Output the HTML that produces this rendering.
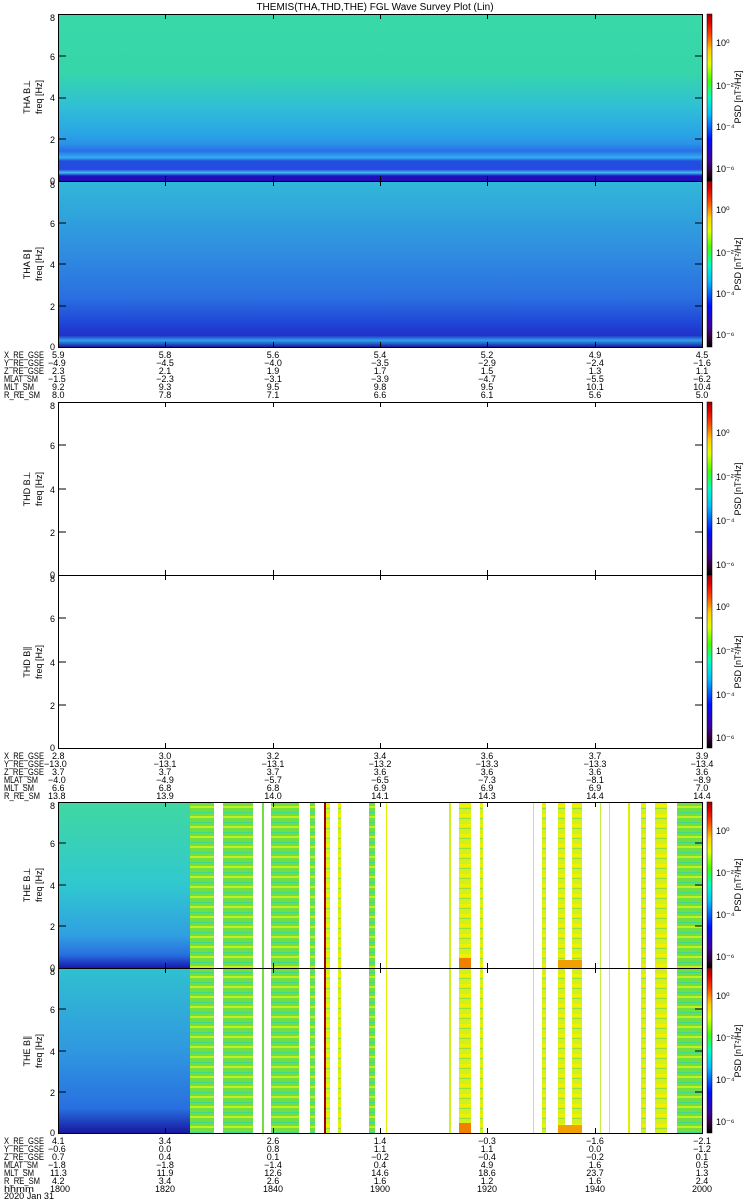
<!DOCTYPE html>
<html><head><meta charset="utf-8"><style>
html,body{margin:0;padding:0;background:#fff;width:750px;height:1200px;overflow:hidden}
svg{display:block}
text{font-family:"Liberation Sans",sans-serif;font-size:9px;fill:#000}
</style></head><body>
<svg width="750" height="1200" viewBox="0 0 750 1200" xmlns="http://www.w3.org/2000/svg">
<defs>
<linearGradient id="jet" x1="0" y1="1" x2="0" y2="0">
<stop offset="0" stop-color="#000"/><stop offset="0.05" stop-color="#300030"/><stop offset="0.12" stop-color="#4000a0"/><stop offset="0.25" stop-color="#0010ff"/><stop offset="0.4" stop-color="#00c0ff"/><stop offset="0.5" stop-color="#00ffc0"/><stop offset="0.6" stop-color="#40ff00"/><stop offset="0.7" stop-color="#e0ff00"/><stop offset="0.78" stop-color="#ffd000"/><stop offset="0.88" stop-color="#ff4000"/><stop offset="0.95" stop-color="#e00000"/><stop offset="1" stop-color="#a00000"/>
</linearGradient>
<linearGradient id="aBL" x1="0" y1="0" x2="0" y2="1">
<stop offset="0" stop-color="#38d8a8"/><stop offset="0.35" stop-color="#36d6aa"/><stop offset="0.55" stop-color="#30c0d4"/><stop offset="0.72" stop-color="#2aa4e6"/><stop offset="0.78" stop-color="#2a90e8"/><stop offset="0.82" stop-color="#2870e8"/><stop offset="0.86" stop-color="#30b0f0"/><stop offset="0.88" stop-color="#2050e0"/><stop offset="0.93" stop-color="#2848e0"/><stop offset="0.95" stop-color="#40c0f0"/><stop offset="0.97" stop-color="#2010c0"/><stop offset="1" stop-color="#2010b0"/>
</linearGradient>
<linearGradient id="aBII" x1="0" y1="0" x2="0" y2="1">
<stop offset="0" stop-color="#30b8d8"/><stop offset="0.4" stop-color="#3090e0"/><stop offset="0.7" stop-color="#2a70e0"/><stop offset="0.85" stop-color="#2048d8"/><stop offset="0.93" stop-color="#2030c8"/><stop offset="0.96" stop-color="#30a0e8"/><stop offset="1" stop-color="#1818a0"/>
</linearGradient>
<linearGradient id="eBL" x1="0" y1="0" x2="0" y2="1">
<stop offset="0" stop-color="#40d8a0"/><stop offset="0.5" stop-color="#30c8d0"/><stop offset="0.8" stop-color="#30a0e0"/><stop offset="0.92" stop-color="#2870e0"/><stop offset="1" stop-color="#1818b0"/>
</linearGradient>
<linearGradient id="eBII" x1="0" y1="0" x2="0" y2="1">
<stop offset="0" stop-color="#30c0d0"/><stop offset="0.5" stop-color="#3098e0"/><stop offset="0.85" stop-color="#2870e0"/><stop offset="1" stop-color="#1818a0"/>
</linearGradient>
<pattern id="strG" width="4" height="10" patternUnits="userSpaceOnUse"><rect width="4" height="10" fill="#70e040"/><rect y="6" width="4" height="2" fill="#c0f020"/><rect y="2" width="4" height="1" fill="#40d890"/></pattern>
<pattern id="strY" width="4" height="10" patternUnits="userSpaceOnUse"><rect width="4" height="10" fill="#d0f020"/><rect y="4" width="4" height="3" fill="#f0f000"/><rect y="8" width="4" height="1" fill="#90e040"/></pattern>
</defs>

<text x="375" y="10" text-anchor="middle" style="font-size:10px">THEMIS(THA,THD,THE) FGL Wave Survey Plot (Lin)</text>

<rect x="58" y="14" width="644" height="167" fill="url(#aBL)"/>
<rect x="58" y="181" width="644" height="166" fill="url(#aBII)"/>
<rect x="58" y="802" width="134" height="166" fill="url(#eBL)"/>
<rect x="58" y="968" width="134" height="165" fill="url(#eBII)"/>
<g>
<rect x="190" y="802" width="24" height="331" fill="url(#strG)"/>
<rect x="223" y="802" width="30" height="331" fill="url(#strG)"/>
<rect x="262" y="802" width="2" height="331" fill="#70e040"/>
<rect x="271" y="802" width="28" height="331" fill="url(#strG)"/>
<rect x="310" y="802" width="5" height="331" fill="url(#strG)"/>
<rect x="324" y="802" width="2" height="331" fill="#a00000"/>
<rect x="326" y="802" width="4" height="331" fill="url(#strY)"/>
<rect x="338" y="802" width="3" height="331" fill="url(#strY)"/>
<rect x="369" y="802" width="6" height="331" fill="url(#strG)"/>
<rect x="386" y="802" width="1" height="331" fill="#e0f000"/>
<rect x="449" y="802" width="2" height="331" fill="#d0f020"/>
<rect x="459" y="802" width="12" height="331" fill="url(#strY)"/>
<rect x="480" y="802" width="3" height="331" fill="url(#strY)"/>
<rect x="533" y="802" width="1" height="331" fill="#e0f000"/>
<rect x="542" y="802" width="4" height="331" fill="url(#strY)"/>
<rect x="558" y="802" width="7" height="331" fill="url(#strY)"/>
<rect x="572" y="802" width="10" height="331" fill="url(#strY)"/>
<rect x="600" y="802" width="1" height="331" fill="#c0f040"/>
<rect x="609" y="802" width="1" height="331" fill="#e0f000"/>
<rect x="628" y="802" width="2" height="331" fill="#e0f000"/>
<rect x="641" y="802" width="5" height="331" fill="url(#strY)"/>
<rect x="655" y="802" width="12" height="331" fill="url(#strY)"/>
<rect x="677" y="802" width="25" height="331" fill="url(#strG)"/>
<rect x="459" y="958" width="12" height="10" fill="#f08000"/>
<rect x="459" y="1123" width="12" height="10" fill="#f08000"/>
<rect x="558" y="960" width="24" height="8" fill="#f0a000"/>
<rect x="558" y="1125" width="24" height="8" fill="#f0a000"/>
</g>

<g fill="none" stroke="#000" stroke-width="1">
<rect x="58.5" y="14.5" width="644" height="333"/>
<line x1="58" y1="181.5" x2="703" y2="181.5"/>
<rect x="58.5" y="402.5" width="644" height="346"/>
<line x1="58" y1="575.5" x2="703" y2="575.5"/>
<rect x="58.5" y="802.5" width="644" height="331"/>
<line x1="58" y1="968.5" x2="703" y2="968.5"/>
</g>
<g stroke="#000" stroke-width="1">
<path d="M165.5 14v5M273.5 14v5M380.5 14v5M487.5 14v5M595.5 14v5 M165.5 347v-5M273.5 347v-5M380.5 347v-5M487.5 347v-5M595.5 347v-5 M165.5 176v10M273.5 176v10M380.5 176v10M487.5 176v10M595.5 176v10"/>
<path d="M165.5 402v5M273.5 402v5M380.5 402v5M487.5 402v5M595.5 402v5 M165.5 748v-5M273.5 748v-5M380.5 748v-5M487.5 748v-5M595.5 748v-5 M165.5 570v10M273.5 570v10M380.5 570v10M487.5 570v10M595.5 570v10"/>
<path d="M165.5 802v5M273.5 802v5M380.5 802v5M487.5 802v5M595.5 802v5 M165.5 1133v-5M273.5 1133v-5M380.5 1133v-5M487.5 1133v-5M595.5 1133v-5 M165.5 963v10M273.5 963v10M380.5 963v10M487.5 963v10M595.5 963v10"/>
<path d="M58 56h8M58 98h8M58 139h8M58 223h8M58 264h8M58 306h8 M58 445h8M58 489h8M58 532h8M58 618h8M58 662h8M58 705h8 M58 843h8M58 885h8M58 926h8M58 1009h8M58 1051h8M58 1092h8"/>
<path d="M695 56h8M695 98h8M695 139h8M695 223h8M695 264h8M695 306h8 M695 445h8M695 489h8M695 532h8M695 618h8M695 662h8M695 705h8 M695 843h8M695 885h8M695 926h8M695 1009h8M695 1051h8M695 1092h8"/>
</g>

<g text-anchor="end">
<text x="55" y="21">8</text><text x="55" y="60">6</text><text x="55" y="101">4</text><text x="55" y="143">2</text><text x="55" y="184">0</text>
<text x="55" y="188">8</text><text x="55" y="227">6</text><text x="55" y="268">4</text><text x="55" y="310">2</text><text x="55" y="350">0</text>
<text x="55" y="409">8</text><text x="55" y="449">6</text><text x="55" y="493">4</text><text x="55" y="536">2</text><text x="55" y="578">0</text>
<text x="55" y="582">8</text><text x="55" y="622">6</text><text x="55" y="666">4</text><text x="55" y="709">2</text><text x="55" y="751">0</text>
<text x="55" y="809">8</text><text x="55" y="847">6</text><text x="55" y="889">4</text><text x="55" y="930">2</text><text x="55" y="971">0</text>
<text x="55" y="975">8</text><text x="55" y="1013">6</text><text x="55" y="1055">4</text><text x="55" y="1096">2</text><text x="55" y="1136">0</text>
</g>
<g text-anchor="middle">
<text transform="translate(30,97) rotate(-90)">THA B⊥</text><text transform="translate(42,97) rotate(-90)">freq [Hz]</text>
<text transform="translate(30,264) rotate(-90)">THA B∥</text><text transform="translate(42,264) rotate(-90)">freq [Hz]</text>
<text transform="translate(30,489) rotate(-90)">THD B⊥</text><text transform="translate(42,489) rotate(-90)">freq [Hz]</text>
<text transform="translate(30,662) rotate(-90)">THD B∥</text><text transform="translate(42,662) rotate(-90)">freq [Hz]</text>
<text transform="translate(30,885) rotate(-90)">THE B⊥</text><text transform="translate(42,885) rotate(-90)">freq [Hz]</text>
<text transform="translate(30,1051) rotate(-90)">THE B∥</text><text transform="translate(42,1051) rotate(-90)">freq [Hz]</text>
</g>

<g stroke="#000" stroke-width="0.5">
<rect x="707" y="14" width="5" height="167" fill="url(#jet)"/>
<rect x="707" y="181" width="5" height="166" fill="url(#jet)"/>
<rect x="707" y="402" width="5" height="173" fill="url(#jet)"/>
<rect x="707" y="575" width="5" height="173" fill="url(#jet)"/>
<rect x="707" y="802" width="5" height="166" fill="url(#jet)"/>
<rect x="707" y="968" width="5" height="165" fill="url(#jet)"/>
</g>
<g style="font-size:8px">
<text x="716" y="46">10⁰</text><text x="716" y="89">10⁻²</text><text x="716" y="130">10⁻⁴</text><text x="716" y="172">10⁻⁶</text>
<text x="716" y="213">10⁰</text><text x="716" y="256">10⁻²</text><text x="716" y="297">10⁻⁴</text><text x="716" y="338">10⁻⁶</text>
<text x="716" y="436">10⁰</text><text x="716" y="480">10⁻²</text><text x="716" y="524">10⁻⁴</text><text x="716" y="568">10⁻⁶</text>
<text x="716" y="610">10⁰</text><text x="716" y="654">10⁻²</text><text x="716" y="698">10⁻⁴</text><text x="716" y="741">10⁻⁶</text>
<text x="716" y="834">10⁰</text><text x="716" y="876">10⁻²</text><text x="716" y="918">10⁻⁴</text><text x="716" y="960">10⁻⁶</text>
<text x="716" y="999">10⁰</text><text x="716" y="1041">10⁻²</text><text x="716" y="1083">10⁻⁴</text><text x="716" y="1125">10⁻⁶</text>
</g>
<g text-anchor="middle">
<text transform="translate(741,97) rotate(-90)">PSD [nT²/Hz]</text>
<text transform="translate(741,264) rotate(-90)">PSD [nT²/Hz]</text>
<text transform="translate(741,489) rotate(-90)">PSD [nT²/Hz]</text>
<text transform="translate(741,662) rotate(-90)">PSD [nT²/Hz]</text>
<text transform="translate(741,885) rotate(-90)">PSD [nT²/Hz]</text>
<text transform="translate(741,1051) rotate(-90)">PSD [nT²/Hz]</text>
</g>

<g style="font-size:8.5px">
<text x="4" y="358" textLength="40" lengthAdjust="spacingAndGlyphs">X_RE_GSE</text><text x="4" y="366" textLength="40" lengthAdjust="spacingAndGlyphs">Y_RE_GSE</text><text x="4" y="374" textLength="40" lengthAdjust="spacingAndGlyphs">Z_RE_GSE</text><text x="4" y="382" textLength="34" lengthAdjust="spacingAndGlyphs">MLAT_SM</text><text x="4" y="390" textLength="30" lengthAdjust="spacingAndGlyphs">MLT_SM</text><text x="4" y="398" textLength="36" lengthAdjust="spacingAndGlyphs">R_RE_SM</text>
<text x="52" y="358">5.9</text><text x="48" y="366">−4.9</text><text x="52" y="374">2.3</text><text x="48" y="382">−1.5</text><text x="52" y="390">9.2</text><text x="52" y="398">8.0</text>
<g text-anchor="middle">
<text x="165" y="358">5.8</text><text x="165" y="366">−4.5</text><text x="165" y="374">2.1</text><text x="165" y="382">−2.3</text><text x="165" y="390">9.3</text><text x="165" y="398">7.8</text>
<text x="273" y="358">5.6</text><text x="273" y="366">−4.0</text><text x="273" y="374">1.9</text><text x="273" y="382">−3.1</text><text x="273" y="390">9.5</text><text x="273" y="398">7.1</text>
<text x="380" y="358">5.4</text><text x="380" y="366">−3.5</text><text x="380" y="374">1.7</text><text x="380" y="382">−3.9</text><text x="380" y="390">9.8</text><text x="380" y="398">6.6</text>
<text x="487" y="358">5.2</text><text x="487" y="366">−2.9</text><text x="487" y="374">1.5</text><text x="487" y="382">−4.7</text><text x="487" y="390">9.5</text><text x="487" y="398">6.1</text>
<text x="595" y="358">4.9</text><text x="595" y="366">−2.4</text><text x="595" y="374">1.3</text><text x="595" y="382">−5.5</text><text x="595" y="390">10.1</text><text x="595" y="398">5.6</text>
<text x="702" y="358">4.5</text><text x="702" y="366">−1.6</text><text x="702" y="374">1.1</text><text x="702" y="382">−6.2</text><text x="702" y="390">10.4</text><text x="702" y="398">5.0</text>
</g>
<text x="4" y="759" textLength="40" lengthAdjust="spacingAndGlyphs">X_RE_GSE</text><text x="4" y="767" textLength="40" lengthAdjust="spacingAndGlyphs">Y_RE_GSE</text><text x="4" y="775" textLength="40" lengthAdjust="spacingAndGlyphs">Z_RE_GSE</text><text x="4" y="783" textLength="34" lengthAdjust="spacingAndGlyphs">MLAT_SM</text><text x="4" y="791" textLength="30" lengthAdjust="spacingAndGlyphs">MLT_SM</text><text x="4" y="799" textLength="36" lengthAdjust="spacingAndGlyphs">R_RE_SM</text>
<text x="52" y="759">2.8</text><text x="44" y="767">−13.0</text><text x="52" y="775">3.7</text><text x="48" y="783">−4.0</text><text x="52" y="791">6.6</text><text x="48" y="799">13.8</text>
<g text-anchor="middle">
<text x="165" y="759">3.0</text><text x="165" y="767">−13.1</text><text x="165" y="775">3.7</text><text x="165" y="783">−4.9</text><text x="165" y="791">6.8</text><text x="165" y="799">13.9</text>
<text x="273" y="759">3.2</text><text x="273" y="767">−13.1</text><text x="273" y="775">3.7</text><text x="273" y="783">−5.7</text><text x="273" y="791">6.8</text><text x="273" y="799">14.0</text>
<text x="380" y="759">3.4</text><text x="380" y="767">−13.2</text><text x="380" y="775">3.6</text><text x="380" y="783">−6.5</text><text x="380" y="791">6.9</text><text x="380" y="799">14.1</text>
<text x="487" y="759">3.6</text><text x="487" y="767">−13.3</text><text x="487" y="775">3.6</text><text x="487" y="783">−7.3</text><text x="487" y="791">6.9</text><text x="487" y="799">14.3</text>
<text x="595" y="759">3.7</text><text x="595" y="767">−13.3</text><text x="595" y="775">3.6</text><text x="595" y="783">−8.1</text><text x="595" y="791">6.9</text><text x="595" y="799">14.4</text>
<text x="702" y="759">3.9</text><text x="702" y="767">−13.4</text><text x="702" y="775">3.6</text><text x="702" y="783">−8.9</text><text x="702" y="791">7.0</text><text x="702" y="799">14.4</text>
</g>
<text x="4" y="1144" textLength="40" lengthAdjust="spacingAndGlyphs">X_RE_GSE</text><text x="4" y="1152" textLength="40" lengthAdjust="spacingAndGlyphs">Y_RE_GSE</text><text x="4" y="1160" textLength="40" lengthAdjust="spacingAndGlyphs">Z_RE_GSE</text><text x="4" y="1168" textLength="34" lengthAdjust="spacingAndGlyphs">MLAT_SM</text><text x="4" y="1176" textLength="30" lengthAdjust="spacingAndGlyphs">MLT_SM</text><text x="4" y="1184" textLength="36" lengthAdjust="spacingAndGlyphs">R_RE_SM</text><text x="4" y="1192" textLength="30" lengthAdjust="spacingAndGlyphs">hhmm</text><text x="4" y="1199" textLength="50" lengthAdjust="spacingAndGlyphs">2020 Jan 31</text>
<text x="52" y="1144">4.1</text><text x="48" y="1152">−0.6</text><text x="52" y="1160">0.7</text><text x="48" y="1168">−1.8</text><text x="50" y="1176">11.3</text><text x="52" y="1184">4.2</text><text x="50" y="1192">1800</text>
<g text-anchor="middle">
<text x="165" y="1144">3.4</text><text x="165" y="1152">0.0</text><text x="165" y="1160">0.4</text><text x="165" y="1168">−1.8</text><text x="165" y="1176">11.9</text><text x="165" y="1184">3.4</text><text x="165" y="1192">1820</text>
<text x="273" y="1144">2.6</text><text x="273" y="1152">0.8</text><text x="273" y="1160">0.1</text><text x="273" y="1168">−1.4</text><text x="273" y="1176">12.6</text><text x="273" y="1184">2.6</text><text x="273" y="1192">1840</text>
<text x="380" y="1144">1.4</text><text x="380" y="1152">1.1</text><text x="380" y="1160">−0.2</text><text x="380" y="1168">0.4</text><text x="380" y="1176">14.6</text><text x="380" y="1184">1.6</text><text x="380" y="1192">1900</text>
<text x="487" y="1144">−0.3</text><text x="487" y="1152">1.1</text><text x="487" y="1160">−0.4</text><text x="487" y="1168">4.9</text><text x="487" y="1176">18.6</text><text x="487" y="1184">1.2</text><text x="487" y="1192">1920</text>
<text x="595" y="1144">−1.6</text><text x="595" y="1152">0.0</text><text x="595" y="1160">−0.2</text><text x="595" y="1168">1.6</text><text x="595" y="1176">23.7</text><text x="595" y="1184">1.6</text><text x="595" y="1192">1940</text>
<text x="702" y="1144">−2.1</text><text x="702" y="1152">−1.2</text><text x="702" y="1160">0.1</text><text x="702" y="1168">0.5</text><text x="702" y="1176">1.3</text><text x="702" y="1184">2.4</text><text x="702" y="1192">2000</text>
</g>
</g>
</svg>
</body></html>
